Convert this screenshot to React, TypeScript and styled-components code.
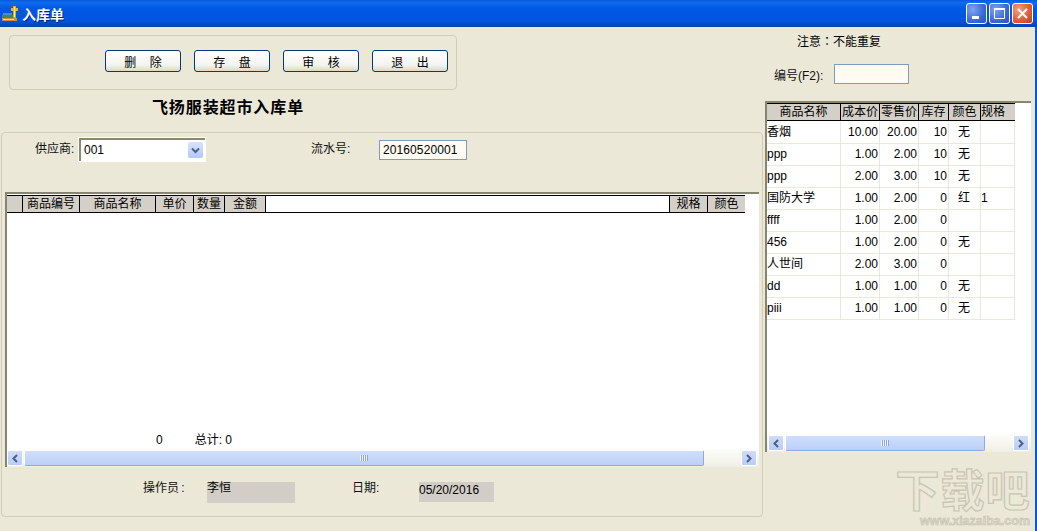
import React from 'react'
import styled, { createGlobalStyle } from 'styled-components'

const GlobalStyle = createGlobalStyle`
  html, body {
    margin: 0;
    padding: 0;
    background: #ebe8d8;
  }
  body {
    font-family: "Liberation Sans", "Noto Sans CJK SC", sans-serif;
    font-size: 12px;
    color: #000;
  }
`

const Win = styled.div`
  position: relative;
  width: 1037px;
  height: 531px;
  overflow: hidden;
  display: flex;
  flex-direction: column;
  background: #ebe8d8;
`

const TitleBar = styled.div`
  height: 27px;
  flex: none;
  box-sizing: border-box;
  padding: 0 4px 0 2px;
  display: flex;
  align-items: center;
  gap: 4px;
  background: linear-gradient(#0a56d8 0%, #0f6cf0 10%, #0058e4 30%, #0055e2 75%, #0049c4 92%, #0040a8 100%);
`

const TitleText = styled.span`
  flex: 1;
  color: #fff;
  font-size: 14px;
  font-weight: 700;
  text-shadow: 1px 1px 0 #00207a;
`

const CaptionGroup = styled.div`
  display: flex;
  gap: 2px;
`

const CaptionBtn = styled.div<{ $close?: boolean }>`
  width: 21px;
  height: 21px;
  box-sizing: border-box;
  border: 1px solid #fff;
  border-radius: 3px;
  display: flex;
  align-items: center;
  justify-content: center;
  background: ${(p) =>
    p.$close
      ? 'radial-gradient(circle at 30% 30%, #f0a080, #e0603a 55%, #c23a14)'
      : 'radial-gradient(circle at 30% 30%, #7fa4f2, #3a68d8 60%, #2a52c0)'};
`

const Main = styled.div`
  flex: 1;
  display: flex;
  min-height: 0;
  border-right: 2px solid #0855dd;
`

const LeftCol = styled.div`
  width: 765px;
  flex: none;
  box-sizing: border-box;
  padding: 8px 2px 14px 1px;
  display: flex;
  flex-direction: column;
`

const Toolbar = styled.div`
  width: 448px;
  height: 55px;
  margin-left: 8px;
  box-sizing: border-box;
  border: 1px solid #d0cdb9;
  border-radius: 4px;
  padding: 14px 8px 0 0;
  display: flex;
  justify-content: flex-end;
  gap: 13px;
`

const ActionBtn = styled.button`
  width: 76px;
  height: 22px;
  padding: 0;
  box-sizing: border-box;
  border: 1px solid #003c74;
  border-radius: 3px;
  background: linear-gradient(#ffffff, #f4f3ee 70%, #dcd8ca);
  font: inherit;
  font-size: 12px;
  color: #000;
  white-space: pre;
`

const Heading = styled.div`
  width: 454px;
  height: 42px;
  box-sizing: border-box;
  padding-bottom: 10px;
  display: flex;
  align-items: center;
  justify-content: center;
  font-size: 16px;
  font-weight: 700;
  letter-spacing: 0.9px;
`

const Panel = styled.div`
  flex: 1;
  box-sizing: border-box;
  border: 1px solid #d0cdb9;
  border-radius: 4px;
  padding: 0 3px;
  display: flex;
  flex-direction: column;
`

const FormRow = styled.div`
  height: 59px;
  flex: none;
  box-sizing: border-box;
  padding-top: 5px;
  display: flex;
  align-items: flex-start;
`

const Label = styled.span<{ $w: number; $ml?: number }>`
  width: ${(p) => p.$w}px;
  margin-left: ${(p) => p.$ml ?? 0}px;
  flex: none;
  line-height: 22px;
  font-size: 12px;
  color: #111;
`

const FooterLabel = styled(Label)`
  line-height: 12px;
  word-spacing: -1px;
`

const Combo = styled.div`
  width: 126px;
  height: 23px;
  flex: none;
  box-sizing: border-box;
  border-top: 2px solid #8a8775;
  border-left: 2px solid #8a8775;
  outline: 1px solid #fff;
  background: #fff;
  display: flex;
  align-items: center;
  padding: 0 0 1px 3px;
`

const ComboValue = styled.span`
  flex: 1;
`

const ComboArrow = styled.div`
  width: 15px;
  height: 16px;
  margin-right: 2px;
  border-radius: 2px;
  background: linear-gradient(#d8e4fb, #b2c9f6);
  display: flex;
  align-items: center;
  justify-content: center;
`

const SerialInput = styled.div`
  width: 88px;
  height: 20px;
  margin-top: 2px;
  flex: none;
  box-sizing: border-box;
  border: 1px solid #7f9db9;
  background: #fffbf2;
  padding-left: 3px;
  line-height: 18px;
  letter-spacing: 0.1px;
`

const GridFrame = styled.div`
  height: 275px;
  flex: none;
  width: 754px;
  box-sizing: border-box;
  border-top: 2px solid #87846f;
  border-left: 2px solid #87846f;
  background: #fff;
  display: flex;
  flex-direction: column;
`

const HeadRow = styled.div`
  display: flex;
  width: 738px;
  height: 16px;
  flex: none;
  margin-top: 1px;
  border-top: 1px solid #000;
  border-bottom: 1px solid #000;
`

const HeadCell = styled.div<{ $w: number; $blank?: boolean; $align?: string }>`
  width: ${(p) => p.$w}px;
  flex: ${(p) => (p.$blank ? '1' : 'none')};
  box-sizing: border-box;
  background: ${(p) => (p.$blank ? '#fff' : '#d4d0c8')};
  border-right: 1px solid #000;
  text-align: ${(p) => p.$align ?? 'center'};
  line-height: 16px;
  font-size: 12px;
  white-space: nowrap;
  overflow: hidden;
  &:last-child {
    border-right: none;
  }
`

const GridBody = styled.div`
  flex: 1;
  position: relative;
  min-height: 0;
`

const TotalRow = styled.div`
  position: absolute;
  left: 149px;
  bottom: 1px;
  display: flex;
  gap: 32px;
  line-height: 16px;
`

const ScrollBar = styled.div<{ $pl?: number }>`
  height: 18px;
  flex: none;
  box-sizing: border-box;
  padding: 1px 2px 1px ${(p) => p.$pl ?? 0}px;
  display: flex;
  gap: 1px;
  background: linear-gradient(#fdfdfa, #f0efe6);
`

const ScrollBtn = styled.div`
  width: 16px;
  flex: none;
  box-sizing: border-box;
  border: 1px solid #fff;
  border-radius: 2px;
  background: linear-gradient(#cfdcf9, #b8cdf6);
  display: flex;
  align-items: center;
  justify-content: center;
`

const ScrollThumb = styled.div<{ $w: number }>`
  width: ${(p) => p.$w}px;
  flex: none;
  box-sizing: border-box;
  border: 1px solid #fff;
  border-bottom: 1px solid #8fa9dc;
  border-right: 1px solid #8fa9dc;
  border-radius: 2px;
  background: linear-gradient(#cfdefb, #bcd0f8);
  display: flex;
  align-items: center;
  justify-content: center;
`

const ScrollTrack = styled.div`
  flex: 1;
`

const Grip = styled.div`
  width: 8px;
  height: 6px;
  background: repeating-linear-gradient(90deg, #eef3fe 0 1px, #8ca6dc 1px 2px);
`

const FooterRow = styled.div`
  flex: 1;
  box-sizing: border-box;
  padding-top: 15px;
  display: flex;
  align-items: flex-start;
`

const ReadOnly = styled.div<{ $w: number; $h: number; $ml?: number; $lh: number }>`
  width: ${(p) => p.$w}px;
  height: ${(p) => p.$h}px;
  margin-left: ${(p) => p.$ml ?? 0}px;
  flex: none;
  background: #d2cec7;
  line-height: ${(p) => p.$lh}px;
  font-size: 12px;
`

const RightCol = styled.div`
  flex: 1;
  display: flex;
  flex-direction: column;
`

const Notice = styled.div`
  height: 30px;
  box-sizing: border-box;
  padding: 6px 0 0 32px;
  line-height: 16px;
  font-family: "Noto Sans CJK TC", sans-serif;
`

const CodeRow = styled.div`
  display: flex;
  align-items: center;
  height: 20px;
  margin-top: 7px;
  padding-left: 9px;
`

const CodeLabel = styled.span`
  width: 60px;
  flex: none;
  font-size: 12px;
  color: #111;
`

const CodeInput = styled.div`
  width: 75px;
  height: 20px;
  box-sizing: border-box;
  border: 1px solid #7f9db9;
  background: #fffbf2;
`

const SideFrame = styled.div`
  width: 266px;
  height: 351px;
  margin-top: 17px;
  box-sizing: border-box;
  border-top: 2px solid #87846f;
  border-left: 2px solid #87846f;
  background: #fff;
  display: flex;
  flex-direction: column;
`

const SideRows = styled.div`
  flex: 1;
  min-height: 0;
`

const SideHead = styled.div`
  display: flex;
  height: 16px;
  width: 248px;
  margin-bottom: 1px;
  border-top: 1px solid #000;
  border-bottom: 1px solid #000;
`

const SideRow = styled.div`
  display: flex;
  width: 248px;
  height: 22px;
  box-sizing: border-box;
  border-bottom: 1px solid #ebe8d8;
`

const SideCell = styled.div<{ $w: number; $align?: string }>`
  width: ${(p) => p.$w}px;
  flex: none;
  box-sizing: border-box;
  border-right: 1px solid #ebe8d8;
  padding-right: 1px;
  text-align: ${(p) => p.$align ?? 'left'};
  line-height: 21px;
  font-size: 12px;
  white-space: nowrap;
  overflow: hidden;
`

const Watermark = styled.div`
  position: absolute;
  right: 7px;
  bottom: 4px;
  width: 134px;
  display: flex;
  flex-direction: column;
  align-items: center;
  pointer-events: none;
  color: #ebe8d8;
`

const WatermarkTitle = styled.span`
  font-size: 44px;
  font-weight: 700;
  line-height: 46px;
  letter-spacing: 1px;
  -webkit-text-stroke: 1.2px #c8c5b3;
  white-space: nowrap;
`

const WatermarkUrl = styled.span`
  font-size: 12.5px;
  font-weight: 700;
  line-height: 12px;
  align-self: flex-end;
  color: #ddd9c8;
  -webkit-text-stroke: 0.5px #c0bdab;
`

const LeftArrow = () => (
  <svg width="8" height="9" viewBox="0 0 8 9">
    <path d="M6 1 L2.5 4.5 L6 8" fill="none" stroke="#4d6185" strokeWidth="2" />
  </svg>
)

const RightArrow = () => (
  <svg width="8" height="9" viewBox="0 0 8 9">
    <path d="M2 1 L5.5 4.5 L2 8" fill="none" stroke="#4d6185" strokeWidth="2" />
  </svg>
)

const AppIcon = () => (
  <svg width="16" height="16" viewBox="0 0 16 16">
    <rect x="1" y="7" width="9" height="2" fill="#3f9a9a" />
    <rect x="0" y="9" width="11" height="3" fill="#3c8a5a" />
    <rect x="0" y="12" width="15" height="3" fill="#d08a3c" />
    <rect x="1" y="13" width="11" height="1" fill="#f2d8a0" />
    <rect x="11" y="0" width="3" height="12" fill="#e8a028" />
    <rect x="9" y="2" width="7" height="3" fill="#f0b030" />
    <rect x="12" y="1" width="1" height="10" fill="#fff0b0" />
  </svg>
)

const mainHead = [
  ['', 16],
  ['商品编号', 57],
  ['商品名称', 76],
  ['单价', 38],
  ['数量', 31],
  ['金额', 41],
] as const

const sideCols = [74, 39, 39, 30, 32, 34]
const sideHead = ['商品名称', '成本价', '零售价', '库存', '颜色', '规格']
const sideData = [
  ['香烟', '10.00', '20.00', '10', '无', ''],
  ['ppp', '1.00', '2.00', '10', '无', ''],
  ['ppp', '2.00', '3.00', '10', '无', ''],
  ['国防大学', '1.00', '2.00', '0', '红', '1'],
  ['ffff', '1.00', '2.00', '0', '', ''],
  ['456', '1.00', '2.00', '0', '无', ''],
  ['人世间', '2.00', '3.00', '0', '', ''],
  ['dd', '1.00', '1.00', '0', '无', ''],
  ['piii', '1.00', '1.00', '0', '无', ''],
]
const sideAlign = ['left', 'right', 'right', 'right', 'center', 'left']

export default function App() {
  return (
    <Win>
      <GlobalStyle />
      <TitleBar>
        <AppIcon />
        <TitleText>入库单</TitleText>
        <CaptionGroup>
          <CaptionBtn>
            <svg width="13" height="13" viewBox="0 0 13 13">
              <rect x="2" y="9" width="7" height="3" fill="#fff" />
            </svg>
          </CaptionBtn>
          <CaptionBtn>
            <svg width="13" height="13" viewBox="0 0 13 13">
              <path d="M1.5 1.5 H11.5 V11.5 H1.5 Z" fill="none" stroke="#fff" />
              <rect x="1" y="1" width="11" height="2" fill="#fff" />
            </svg>
          </CaptionBtn>
          <CaptionBtn $close>
            <svg width="13" height="13" viewBox="0 0 13 13">
              <path d="M2 2 L11 11 M11 2 L2 11" stroke="#fff" strokeWidth="2" />
            </svg>
          </CaptionBtn>
        </CaptionGroup>
      </TitleBar>
      <Main>
        <LeftCol>
          <Toolbar>
            <ActionBtn>{'删    除'}</ActionBtn>
            <ActionBtn>{'存    盘'}</ActionBtn>
            <ActionBtn>{'审    核'}</ActionBtn>
            <ActionBtn>{'退    出'}</ActionBtn>
          </Toolbar>
          <Heading>飞扬服装超市入库单</Heading>
          <Panel>
            <FormRow>
              <Label $w={44} $ml={30}>供应商:</Label>
              <Combo>
                <ComboValue>001</ComboValue>
                <ComboArrow>
                  <svg width="9" height="7" viewBox="0 0 9 7">
                    <path d="M1 1.5 L4.5 5 L8 1.5" fill="none" stroke="#4d6185" strokeWidth="2" />
                  </svg>
                </ComboArrow>
              </Combo>
              <Label $w={68} $ml={106}>流水号:</Label>
              <SerialInput>20160520001</SerialInput>
            </FormRow>
            <GridFrame>
              <HeadRow>
                {mainHead.map(([text, w], i) => (
                  <HeadCell key={i} $w={w}>{text}</HeadCell>
                ))}
                <HeadCell $w={0} $blank />
                <HeadCell $w={38}>规格</HeadCell>
                <HeadCell $w={37}>颜色</HeadCell>
              </HeadRow>
              <GridBody>
                <TotalRow>
                  <span>0</span>
                  <span>总计: 0</span>
                </TotalRow>
              </GridBody>
              <ScrollBar>
                <ScrollBtn><LeftArrow /></ScrollBtn>
                <ScrollThumb $w={680}><Grip /></ScrollThumb>
                <ScrollTrack />
                <ScrollBtn><RightArrow /></ScrollBtn>
              </ScrollBar>
            </GridFrame>
            <FooterRow>
              <FooterLabel $w={64} $ml={138}>操作员 :</FooterLabel>
              <ReadOnly $w={88} $h={21} $lh={12}>李恒</ReadOnly>
              <FooterLabel $w={39} $ml={57}>日期:</FooterLabel>
              <ReadOnly $w={75} $h={20} $ml={28} $lh={16}>05/20/2016</ReadOnly>
            </FooterRow>
          </Panel>
        </LeftCol>
        <RightCol>
          <Notice>注意：不能重复</Notice>
          <CodeRow>
            <CodeLabel>编号(F2):</CodeLabel>
            <CodeInput />
          </CodeRow>
          <SideFrame>
            <SideRows>
              <SideHead>
                {sideHead.map((t, i) => (
                  <HeadCell key={t} $w={sideCols[i]} $align={i === 5 ? 'left' : undefined}>{t}</HeadCell>
                ))}
              </SideHead>
              {sideData.map((row, r) => (
                <SideRow key={r}>
                  {row.map((v, c) => (
                    <SideCell key={c} $w={sideCols[c]} $align={sideAlign[c]}>{v}</SideCell>
                  ))}
                </SideRow>
              ))}
            </SideRows>
            <ScrollBar $pl={1}>
              <ScrollBtn><LeftArrow /></ScrollBtn>
              <ScrollThumb $w={200}><Grip /></ScrollThumb>
              <ScrollTrack />
              <ScrollBtn><RightArrow /></ScrollBtn>
            </ScrollBar>
          </SideFrame>
        </RightCol>
      </Main>
      <Watermark>
        <WatermarkTitle>下载吧</WatermarkTitle>
        <WatermarkUrl>www.xiazaiba.com</WatermarkUrl>
      </Watermark>
    </Win>
  )
}
